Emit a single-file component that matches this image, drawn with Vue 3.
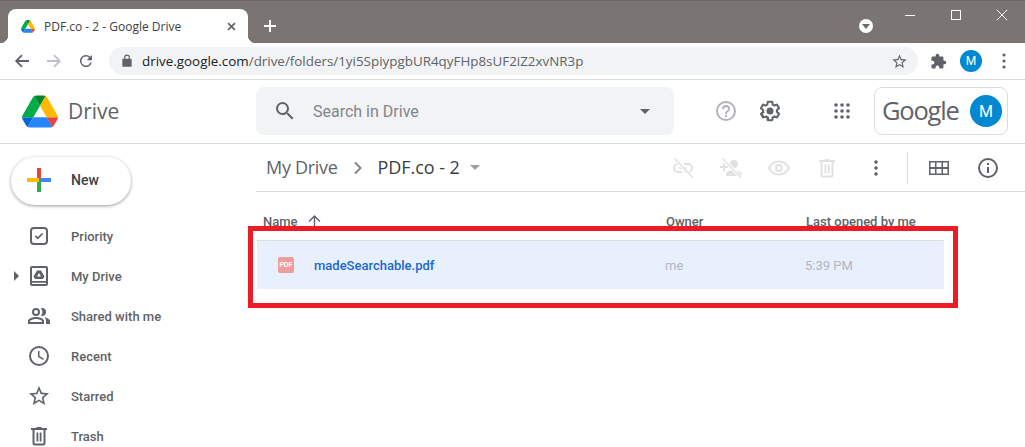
<script setup>
const nav = [
  { label: 'Priority', d: 'M7 3h10a4 4 0 0 1 4 4v10a4 4 0 0 1-4 4H7a4 4 0 0 1-4-4V7a4 4 0 0 1 4-4zm0 2a2 2 0 0 0-2 2v10a2 2 0 0 0 2 2h10a2 2 0 0 0 2-2V7a2 2 0 0 0-2-2H7zM10.800 15.500l-3-3 1.200-1.200 1.800 1.800 4.200-4.200 1.200 1.200z' },
  { label: 'My Drive', caret: true, d: 'M5 2h14a2 2 0 0 1 2 2v16a2 2 0 0 1-2 2H5a2 2 0 0 1-2-2V4a2 2 0 0 1 2-2zm0 2v13h14V4H5zm0 14.800V20h14v-1.200H5zM10 6.500h4l3.500 6-1.500 2.500H8l-1.500-2.500zM12 9l-2 3.500h4z' },
  { label: 'Shared with me', d: 'M9 12a4 4 0 1 0 0-8 4 4 0 0 0 0 8zm0-6a2 2 0 1 1 0 4 2 2 0 0 1 0-4zm0 7c-2.700 0-8 1.300-8 4v3h16v-3c0-2.700-5.300-4-8-4zm6 5H3v-1c.2-.7 3.300-2 6-2s5.800 1.300 6 2v1zM15 4a4 4 0 1 1 0 8c-.4 0-.8-.1-1.100-.2a6 6 0 0 0 0-7.600c.3-.1.7-.2 1.100-.2zM17.500 13.300c2.600.6 5.500 1.900 5.500 3.700v3h-4v-3c0-1.500-.6-2.700-1.500-3.700z' },
  { label: 'Recent', d: 'M12 2a10 10 0 1 0 0 20 10 10 0 0 0 0-20zm0 18a8 8 0 1 1 0-16 8 8 0 0 1 0 16zm.5-13H11v6l5.200 3.100.8-1.300-4.500-2.700V7z' },
  { label: 'Starred', d: 'M22 9.240l-7.190-.62L12 2 9.190 8.630 2 9.240l5.460 4.730L5.820 21 12 17.270 18.180 21l-1.630-7.030L22 9.240zM12 15.400l-3.760 2.270 1-4.280-3.320-2.880 4.380-.38L12 6.100l1.710 4.040 4.380.38-3.320 2.880 1 4.280L12 15.400z' },
  { label: 'Trash', d: 'M15 4l-1-1h-4L9 4H4v2h1.500v13a2.500 2.500 0 0 0 2.500 2.500h8a2.500 2.500 0 0 0 2.500-2.500V6H20V4h-5zm1.500 15a.5.500 0 0 1-.5.5H8a.5.500 0 0 1-.5-.5V6h9v13zM9.500 8.500h1.800v9H9.500zm3.200 0h1.800v9h-1.800z' },
]
const actions = [
  { slash: true, d: 'M17 7h-4v1.900h4a3.100 3.100 0 0 1 0 6.200h-4V17h4a5 5 0 0 0 0-10zM7 7a5 5 0 0 0 0 10h4v-1.900H7a3.100 3.100 0 0 1 0-6.200h4V7H7zm1 4h8v2H8z' },
  { slash: true, d: 'M15 12a4 4 0 1 0-4-4 4 4 0 0 0 4 4zm-9-2V7H4v3H1v2h3v3h2v-3h3v-2H6zm9 4c-2.700 0-8 1.300-8 4v2h16v-2c0-2.700-5.300-4-8-4z' },
  { d: 'M12 4.500C7 4.500 2.700 7.600 1 12c1.700 4.400 6 7.500 11 7.500s9.300-3.100 11-7.500c-1.700-4.400-6-7.500-11-7.500zm0 13c-3.800 0-7.200-2.200-8.800-5.500C4.800 8.700 8.200 6.500 12 6.500s7.200 2.200 8.800 5.500c-1.600 3.300-5 5.500-8.800 5.500zM12 8a4 4 0 1 0 0 8 4 4 0 0 0 0-8zm0 6a2 2 0 1 1 0-4 2 2 0 0 1 0 4z' },
  { d: 'M15 4l-1-1h-4L9 4H4v2h1.500v13a2.500 2.500 0 0 0 2.500 2.500h8a2.500 2.500 0 0 0 2.500-2.500V6H20V4h-5zm1.500 15a.5.500 0 0 1-.5.5H8a.5.500 0 0 1-.5-.5V6h9v13zM9.500 8.500h1.800v9H9.500zm3.200 0h1.800v9h-1.800z' },
]
</script>

<template>
  <div class="page">
    <div class="titlebar">
      <div class="tab">
        <svg class="favicon" viewBox="0 0 87.300 78">
          <path d="m6.600 66.850 3.850 6.650c.8 1.400 1.950 2.500 3.300 3.300l13.750-23.800h-27.500c0 1.550.4 3.100 1.200 4.500z" fill="#0066da"/>
          <path d="m43.650 25-13.750-23.800c-1.350.8-2.500 1.900-3.300 3.300l-25.400 44a9.060 9.060 0 0 0 -1.200 4.500h27.500z" fill="#00ac47"/>
          <path d="m73.550 76.800c1.350-.8 2.500-1.900 3.300-3.300l1.600-2.750 7.650-13.250c.8-1.400 1.200-2.950 1.200-4.500h-27.502l5.852 11.500z" fill="#ea4335"/>
          <path d="m43.650 25 13.750-23.800c-1.350-.8-2.900-1.200-4.500-1.200h-18.500c-1.600 0-3.150.45-4.500 1.200z" fill="#00832d"/>
          <path d="m59.800 53h-32.300l-13.750 23.800c1.350.8 2.900 1.200 4.500 1.200h50.800c1.600 0 3.150-.45 4.500-1.200z" fill="#2684fc"/>
          <path d="m73.400 26.500-12.700-22c-.8-1.400-1.950-2.500-3.300-3.300l-13.750 23.800 16.150 28h27.450c0-1.550-.4-3.100-1.200-4.500z" fill="#ffba00"/>
        </svg>
        <span class="tab-title">PDF.co - 2 - Google Drive</span>
        <svg class="tab-close" viewBox="0 0 10 10"><path d="M1.200 1.200l7.600 7.600M8.800 1.200l-7.600 7.600" stroke="#5f6368" stroke-width="1.800"/></svg>
      </div>
      <svg class="newtab" viewBox="0 0 12 12"><path d="M6 0v12M0 6h12" stroke="#fff" stroke-width="2"/></svg>
      <div class="profile-dot"><i></i></div>
      <div class="winctl">
        <svg viewBox="0 0 12 12"><path d="M1 6.500h10" stroke="#fff" stroke-width="1"/></svg>
        <svg viewBox="0 0 12 12"><rect x="1.500" y="1.500" width="9" height="9" fill="none" stroke="#fff"/></svg>
        <svg viewBox="0 0 12 12"><path d="M.8.800l10.400 10.400M11.200.8.800 11.200" stroke="#fff" stroke-width="1"/></svg>
      </div>
    </div>

    <div class="chromebar">
      <svg class="cb-icon first" viewBox="0 0 16 16"><path d="M15 8H2.500M8 2.200 2.200 8 8 13.800" fill="none" stroke="#5f6368" stroke-width="1.800"/></svg>
      <svg class="cb-icon" viewBox="0 0 16 16"><path d="M1 8h12.500M8 2.200 13.800 8 8 13.800" fill="none" stroke="#bdc1c6" stroke-width="1.800"/></svg>
      <svg class="cb-icon" viewBox="0 0 24 24"><path fill="#5f6368" d="M17.650 6.350A8 8 0 1 0 19.730 14h-2.080A6 6 0 1 1 12 6c1.660 0 3.140.69 4.220 1.780L13 11h7V4l-2.350 2.350z"/></svg>
      <div class="omnibox">
        <svg class="lock" viewBox="0 0 24 24"><path fill="#5f6368" d="M18 8h-1V6a5 5 0 0 0-10 0v2H6a2 2 0 0 0-2 2v10a2 2 0 0 0 2 2h12a2 2 0 0 0 2-2V10a2 2 0 0 0-2-2zM9 6a3 3 0 0 1 6 0v2H9V6z"/></svg>
        <span class="url"><b>drive.google.com</b>/drive/folders/1yi5SpiypgbUR4qyFHp8sUF2iZ2xvNR3p</span>
        <svg class="omni-star" viewBox="0 0 24 24"><path fill="#5f6368" d="M22 9.240l-7.190-.62L12 2 9.190 8.630 2 9.240l5.460 4.730L5.820 21 12 17.270 18.180 21l-1.630-7.030L22 9.240zM12 15.400l-3.760 2.270 1-4.280-3.320-2.880 4.380-.38L12 6.100l1.710 4.040 4.380.38-3.320 2.880 1 4.280L12 15.400z"/></svg>
      </div>
      <svg class="puzzle" viewBox="0 0 24 24"><path fill="#5f6368" d="M20.500 11H19V7a2 2 0 0 0-2-2h-4V3.500a2.500 2.500 0 0 0-5 0V5H4a2 2 0 0 0-2 2v3.800h1.500a2.700 2.700 0 0 1 0 5.400H2V20a2 2 0 0 0 2 2h3.800v-1.500a2.700 2.700 0 0 1 5.400 0V22H17a2 2 0 0 0 2-2v-4h1.500a2.500 2.500 0 0 0 0-5z"/></svg>
      <div class="avatar small">M</div>
      <svg class="kebab" viewBox="0 0 4 16"><circle cx="2" cy="2" r="1.600"/><circle cx="2" cy="8" r="1.600"/><circle cx="2" cy="14" r="1.600"/></svg>
    </div>

    <header class="drivebar">
      <div class="brand">
        <svg class="logo" viewBox="0 0 87.300 78">
          <path d="m6.600 66.850 3.850 6.650c.8 1.400 1.950 2.500 3.300 3.300l13.750-23.800h-27.500c0 1.550.4 3.100 1.200 4.500z" fill="#0066da"/>
          <path d="m43.650 25-13.750-23.800c-1.350.8-2.500 1.900-3.300 3.300l-25.400 44a9.060 9.060 0 0 0 -1.200 4.500h27.500z" fill="#00ac47"/>
          <path d="m73.550 76.800c1.350-.8 2.500-1.900 3.300-3.300l1.600-2.750 7.650-13.250c.8-1.400 1.200-2.950 1.200-4.500h-27.502l5.852 11.500z" fill="#ea4335"/>
          <path d="m43.650 25 13.750-23.800c-1.350-.8-2.900-1.200-4.500-1.200h-18.500c-1.600 0-3.150.45-4.500 1.200z" fill="#00832d"/>
          <path d="m59.800 53h-32.300l-13.750 23.800c1.350.8 2.900 1.200 4.500 1.200h50.800c1.600 0 3.150-.45 4.500-1.200z" fill="#2684fc"/>
          <path d="m73.400 26.500-12.700-22c-.8-1.400-1.950-2.500-3.300-3.300l-13.750 23.800 16.150 28h27.450c0-1.550-.4-3.100-1.200-4.500z" fill="#ffba00"/>
        </svg>
        <span class="brand-name">Drive</span>
      </div>
      <div class="search">
        <svg class="search-icon" viewBox="0 0 24 24"><path fill="#5f6368" d="M15.500 14h-.79l-.28-.27A6.470 6.470 0 0 0 16 9.500 6.500 6.500 0 1 0 9.500 16c1.610 0 3.090-.59 4.230-1.570l.27.28v.79l5 4.990L20.490 19l-4.990-5zm-6 0C7.010 14 5 11.990 5 9.500S7.010 5 9.500 5 14 7.010 14 9.500 11.990 14 9.500 14z"/></svg>
        <span class="search-text">Search in Drive</span>
        <i class="tri search-tri"></i>
      </div>
      <svg class="help" viewBox="0 0 24 24"><path fill="#b0b3b7" d="M11 18h2v-2h-2v2zm1-16a10 10 0 1 0 0 20 10 10 0 0 0 0-20zm0 18a8 8 0 1 1 0-16 8 8 0 0 1 0 16zm0-14a4 4 0 0 0-4 4h2a2 2 0 1 1 4 0c0 2-3 1.750-3 5h2c0-2.250 3-2.500 3-5a4 4 0 0 0-4-4z"/></svg>
      <svg class="gear" viewBox="0 0 24 24"><path fill="#5f6368" d="M13.850 22.250h-3.700c-.74 0-1.360-.54-1.480-1.250l-.27-1.890c-.27-.14-.53-.29-.79-.46l-1.800.72c-.7.260-1.470-.03-1.810-.65L2.200 15.530c-.35-.66-.2-1.440.36-1.880l1.530-1.190c-.01-.15-.02-.3-.02-.46 0-.15.010-.31.020-.46l-1.520-1.190c-.59-.450-.74-1.260-.37-1.880l1.850-3.190c.34-.62 1.110-.9 1.790-.63l1.810.73c.26-.17.52-.32.780-.46l.27-1.910c.1-.7.720-1.260 1.470-1.260h3.700c.74 0 1.360.54 1.470 1.250l.27 1.890c.27.140.53.290.79.460l1.800-.72c.71-.26 1.480.03 1.820.65l1.840 3.180c.36.660.2 1.440-.36 1.880l-1.520 1.190c.01.150.02.300.02.460s-.01.310-.02.460l1.520 1.190c.56.450.72 1.230.37 1.860l-1.860 3.220c-.34.620-1.110.900-1.800.630l-1.800-.72c-.26.170-.52.320-.78.460l-.27 1.910c-.1.680-.72 1.220-1.460 1.220zm-3.230-2h2.760l.37-2.550.53-.22c.44-.18.88-.44 1.340-.78l.45-.34 2.380.96 1.380-2.400-2.030-1.580.07-.56c.03-.26.060-.530.060-.78s-.03-.53-.06-.78l-.07-.56 2.030-1.580-1.390-2.400-2.390.96-.45-.35c-.42-.32-.87-.58-1.330-.77l-.52-.22-.37-2.550h-2.760l-.37 2.550-.53.210c-.44.190-.88.440-1.340.790l-.45.330-2.380-.950-1.390 2.390 2.030 1.580-.07.560a7 7 0 0 0-.06.790c0 .26.020.530.060.780l.7.560-2.030 1.580 1.380 2.400 2.390-.96.450.35c.43.330.860.580 1.330.770l.53.220.38 2.550z M12 8.500a3.500 3.500 0 1 0 0 7 3.500 3.500 0 0 0 0-7z"/></svg>
      <svg class="apps" viewBox="0 0 16 16"><g fill="#5f6368"><circle cx="2" cy="2" r="1.800"/><circle cx="8" cy="2" r="1.800"/><circle cx="14" cy="2" r="1.800"/><circle cx="2" cy="8" r="1.800"/><circle cx="8" cy="8" r="1.800"/><circle cx="14" cy="8" r="1.800"/><circle cx="2" cy="14" r="1.800"/><circle cx="8" cy="14" r="1.800"/><circle cx="14" cy="14" r="1.800"/></g></svg>
      <div class="account">
        <span class="google">Google</span>
        <div class="avatar big">M</div>
      </div>
    </header>

    <div class="body">
      <aside class="sidebar">
        <button class="newbtn">
          <svg class="plus" viewBox="0 0 24 24">
            <rect x="10" y="0" width="4" height="12" fill="#ea4335"/>
            <rect x="12" y="10" width="12" height="4" fill="#4285f4"/>
            <rect x="10" y="12" width="4" height="12" fill="#34a853"/>
            <rect x="0" y="10" width="12" height="4" fill="#fbbc04"/>
          </svg>
          <span>New</span>
        </button>
        <nav class="nav">
          <div v-for="item in nav" :key="item.label" class="nav-row">
            <i v-if="item.caret" class="caret"></i>
            <svg class="nav-icon" viewBox="0 0 24 24"><path fill="#5f6368" fill-rule="evenodd" :d="item.d"/></svg>
            <span>{{ item.label }}</span>
          </div>
        </nav>
      </aside>

      <main class="main">
        <div class="crumbs">
          <span class="crumb">My Drive</span>
          <svg class="chev" viewBox="0 0 10 14"><path d="M2 1.500 7.500 7 2 12.500" fill="none" stroke="#80868b" stroke-width="2"/></svg>
          <span class="crumb current">PDF.co - 2</span>
          <i class="tri crumb-tri"></i>
          <div class="actions">
            <svg v-for="(a, i) in actions" :key="i" class="action" viewBox="0 0 24 24">
              <path fill="#dfe1e3" fill-rule="evenodd" :d="a.d"/>
              <template v-if="a.slash">
                <path d="M3 2l19 19.500" stroke="#fff" stroke-width="3.500"/>
                <path d="M3.500 2.500l18.500 19" stroke="#dfe1e3" stroke-width="1.700"/>
              </template>
            </svg>
            <svg class="action-kebab" viewBox="0 0 4 16"><circle cx="2" cy="2" r="1.800"/><circle cx="2" cy="8" r="1.800"/><circle cx="2" cy="14" r="1.800"/></svg>
            <span class="divider"></span>
            <svg class="grid-ic" viewBox="0 0 20 14"><path fill="#5f6368" fill-rule="evenodd" d="M0 0h20v14H0V0zm1.500 1.500v4.500h4.500V1.500H1.500zm6 0v4.500h5V1.500h-5zm6.500 0v4.500h4.500V1.500H14zM1.500 8v4.500h4.500V8H1.500zm6 0v4.500h5V8h-5zm6.500 0v4.500h4.500V8H14z"/></svg>
            <svg class="info" viewBox="0 0 24 24"><path fill="#5f6368" d="M11 7h2v2h-2V7zm0 4h2v6h-2v-6zm1-9a10 10 0 1 0 0 20 10 10 0 0 0 0-20zm0 18a8 8 0 1 1 0-16 8 8 0 0 1 0 16z"/></svg>
          </div>
        </div>

        <div class="table">
          <div class="thead">
            <span class="th-name">Name
              <svg class="sort" viewBox="0 0 12 12"><path d="M6 12V1.500M1 6l5-5 5 5" fill="none" stroke="#5f6368" stroke-width="1.300"/></svg>
            </span>
            <span>Owner</span>
            <span>Last opened by me</span>
          </div>
          <div class="row">
            <span class="cell-name">
              <span class="pdf">PDF</span>
              <span class="fname">madeSearchable.pdf</span>
            </span>
            <span class="muted">me</span>
            <span class="muted time">5:39 PM</span>
          </div>
          <div class="highlight"></div>
        </div>
      </main>
    </div>
  </div>
</template>

<style>
html, body { margin: 0; background: #fff; }
</style>

<style scoped>
.page { width: 1025px; height: 447px; overflow: hidden; display: flex; flex-direction: column; font-family: Roboto, "Liberation Sans", sans-serif; color: #5f6368; background: #fff; }
svg { display: block; flex: none; }

.titlebar { height: 43px; box-sizing: border-box; border-top: 1px solid #6c6766; background: #7a7472; display: flex; align-items: flex-end; padding-left: 8px; position: relative; flex: none; }
.tab { width: 240px; height: 34px; background: #fff; border-radius: 8px 8px 0 0; display: flex; align-items: center; padding: 0 0 0 13px; box-sizing: border-box; position: relative; }
.tab::before, .tab::after { content: ""; position: absolute; bottom: 0; width: 8px; height: 8px; background: radial-gradient(circle at 0 0, transparent 8px, #fff 8.500px); }
.tab::before { left: -8px; }
.tab::after { right: -8px; transform: scaleX(-1); }
.favicon { width: 14px; height: 13px; margin-right: 9px; }
.tab-title { font: 12px "Open Sans", sans-serif; color: #3c4043; width: 183px; white-space: nowrap; }
.tab-close { width: 9px; height: 9px; }
.newtab { width: 12px; height: 12px; margin: 0 0 11px 16px; }
.profile-dot { width: 14px; height: 14px; border-radius: 50%; background: #fff; position: absolute; left: 859px; top: 18px; }
.profile-dot i { position: absolute; left: 3px; top: 5px; border: 4px solid transparent; border-top: 5px solid #6e6a69; border-bottom: 0; }
.winctl { position: absolute; right: 17px; top: 8px; display: flex; gap: 34px; }
.winctl svg { width: 12px; height: 12px; }

.chromebar { height: 37px; box-sizing: border-box; border-bottom: 1px solid #dadce0; display: flex; align-items: center; padding: 1px 0 1px 14px; flex: none; }
.cb-icon { width: 16px; height: 16px; margin-right: 16px; }
.cb-icon.first { margin-left: 0; }
.cb-icon:nth-of-type(3) { margin-right: 14px; width: 18px; height: 18px; margin-left: -1px; }
.omnibox { width: 809px; height: 28px; border-radius: 14px; background: #f1f3f4; display: flex; align-items: center; padding-left: 11px; box-sizing: border-box; }
.lock { width: 14px; height: 14px; margin-right: 8px; }
.url { font: 13.400px "Open Sans", sans-serif; color: #5f6368; white-space: nowrap; width: 749px; }
.url b { font-weight: 400; color: #202124; }
.omni-star { width: 17px; height: 17px; }
.puzzle { width: 17px; height: 17px; margin-left: 12px; }
.avatar { border-radius: 50%; background: #0288d1; color: #fff; display: flex; align-items: center; justify-content: center; flex: none; }
.avatar.small { width: 22px; height: 22px; font-size: 12px; margin-left: 13px; }
.kebab { width: 4px; height: 16px; fill: #5f6368; margin-left: 20px; }

.drivebar { height: 64px; box-sizing: border-box; border-bottom: 1px solid #dadce0; display: flex; align-items: center; padding-bottom: 1px; flex: none; }
.brand { width: 256px; display: flex; align-items: center; padding-left: 22px; box-sizing: border-box; }
.logo { width: 36px; height: 33px; }
.brand-name { font: 21px "Open Sans", sans-serif; color: #5f6368; margin-left: 10px; }
.search { width: 418px; height: 48px; border-radius: 8px; background: #f1f3f4; display: flex; align-items: center; padding-left: 17px; box-sizing: border-box; }
.search-icon { width: 24px; height: 24px; }
.search-text { font: 16px Roboto, sans-serif; color: #80868b; margin-left: 16px; width: 327px; }
.tri { display: block; width: 0; height: 0; border: 5px solid transparent; border-top-color: #5f6368; border-bottom: 0; }
.help { width: 24px; height: 24px; margin-left: 40px; }
.gear { width: 24px; height: 24px; margin-left: 20px; }
.apps { width: 16px; height: 16px; margin-left: 52px; }
.account { width: 134px; height: 48px; box-sizing: border-box; border: 1px solid #dadce0; border-radius: 8px; margin-left: 24px; display: flex; align-items: center; padding-left: 7px; }
.google { font: 500 25.500px "Open Sans", sans-serif; letter-spacing: -1.200px; color: #5f6368; width: 88px; line-height: 1; white-space: nowrap; }
.avatar.big { width: 32px; height: 32px; font-size: 16px; }

.body { display: flex; flex: 1; min-height: 0; }
.sidebar { width: 256px; box-sizing: border-box; padding: 13px 0 0 11px; flex: none; }
.newbtn { width: 120px; height: 48px; border: 0; border-radius: 24px; background: #fff; box-shadow: 0 1px 3px rgba(60,64,67,.4), 0 1px 4px rgba(60,64,67,.15); display: flex; align-items: center; padding: 0 0 2px 16px; font: 500 14px Roboto, sans-serif; color: #3c4043; }
.plus { width: 24px; height: 24px; margin-right: 20px; }
.nav { margin: 11px 0 0 -11px; }
.nav-row { height: 40px; display: flex; align-items: center; position: relative; padding-left: 27px; font: 500 13px Roboto, sans-serif; color: #5f6368; }
.nav-icon { width: 24px; height: 24px; margin-right: 20px; }
.caret { position: absolute; left: 14px; top: 15px; border: 5px solid transparent; border-left: 5px solid #5f6368; border-right: 0; }

.main { flex: 1; min-width: 0; }
.crumbs { height: 48px; box-sizing: border-box; border-bottom: 1px solid #dadce0; display: flex; align-items: center; padding-left: 10px; }
.crumb { font: 18px "Open Sans", sans-serif; letter-spacing: -.3px; color: #5f6368; white-space: nowrap; padding-bottom: 1px; }
.crumb.current { color: #3c4043; letter-spacing: -.05px; }
.chev { width: 10px; height: 14px; margin: 0 15px 0 15px; }
.crumb-tri { border-top-color: #9aa0a6; margin-left: 10px; }
.actions { margin-left: auto; display: flex; align-items: center; padding-right: 25px; }
.action { width: 24px; height: 24px; margin-right: 24px; }
.action-kebab { width: 4px; height: 16px; fill: #5f6368; margin: 0 29px 0 11px; }
.divider { width: 1px; height: 32px; background: #dadce0; margin-right: 21px; }
.grid-ic { width: 20px; height: 14px; margin-right: 27px; }
.info { width: 24px; height: 24px; }

.table { position: relative; padding-top: 20px; }
.thead { display: grid; grid-template-columns: 403px 140px 1fr; height: 28px; padding-left: 7px; align-items: center; box-sizing: border-box; font: 500 13px Roboto, sans-serif; color: #5f6368; padding-bottom: 10px; }
.th-name { display: flex; align-items: center; gap: 10px; }
.sort { width: 13px; height: 13px; }
.row { margin-left: 1px; width: 687px; height: 49px; box-sizing: border-box; border-top: 1px solid #dadce0; background: #e8f0fe; display: grid; grid-template-columns: 408px 140px 1fr; align-items: center; font: 500 13px Roboto, sans-serif; }
.cell-name { display: flex; align-items: center; padding-left: 21px; }
.pdf { width: 16px; height: 16px; border-radius: 2px; background: #ee9c9c; color: #fff; font: 700 6.500px "Liberation Sans", sans-serif; text-align: center; line-height: 16px; margin-right: 20px; }
.fname { color: #1a67d2; white-space: nowrap; }
.muted { color: #b4b6bd; font-weight: 400; }
.highlight { position: absolute; left: -8px; top: 34px; width: 710px; height: 82px; box-sizing: border-box; border: 5px solid #ed1c24; pointer-events: none; }
</style>
